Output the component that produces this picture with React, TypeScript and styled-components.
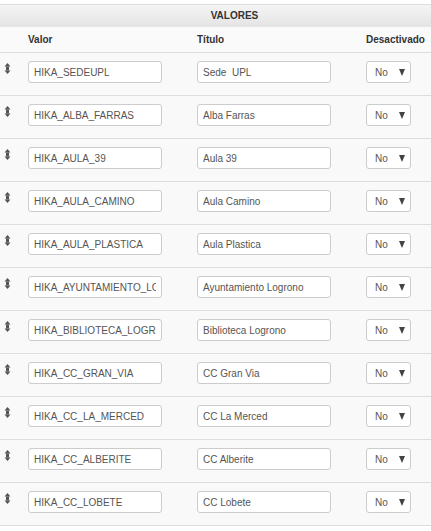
import { createGlobalStyle, styled } from 'styled-components';

const GlobalStyle = createGlobalStyle`
    html, body {
        margin: 0;
        padding: 0;
        background: #ffffff;
        overflow: hidden;
    }
    body {
        font-family: 'Liberation Sans', Arial, sans-serif;
    }
`;

const Page = styled.div`
    padding-top: 4px;
`;

const Table = styled.div`
    width: 431px;
    border-top: 1px solid #dddddd;
    background: #f9f9f9;
`;

// the real table is wider than the window, so the caption sits right of centre
const Caption = styled.div`
    height: 22px;
    line-height: 22px;
    padding-left: 38px;
    text-align: center;
    font-size: 10px;
    font-weight: bold;
    color: #333333;
    background: linear-gradient(to bottom, #f4f4f4, #e4e4e4);
`;

const HeadRow = styled.div`
    display: grid;
    grid-template-columns: 20px 169px 169px 1fr;
    height: 25px;
    align-items: center;
    background: #fafafa;
    border-bottom: 1px solid #dddddd;
`;

const HeadCell = styled.div`
    padding-left: 8px;
    font-size: 10px;
    font-weight: bold;
    color: #333333;
    white-space: nowrap;
`;

const Row = styled.div`
    display: grid;
    grid-template-columns: 20px 169px 169px 1fr;
    align-items: start;
    height: 34px;
    padding-top: 8px;
    border-bottom: 1px solid #dddddd;

    &:first-of-type {
        padding-top: 6px;
    }
`;

const Handle = styled.div`
    display: flex;
    justify-content: center;
    padding-top: 2px;
    padding-right: 6px;
`;

const Cell = styled.div`
    padding-left: 8px;
`;

const TextBox = styled.input`
    display: block;
    box-sizing: border-box;
    width: 134px;
    height: 22px;
    margin: 0;
    padding: 0 5px;
    border: 1px solid #cccccc;
    border-radius: 3px;
    background: #ffffff;
    font-family: 'Liberation Sans', Arial, sans-serif;
    font-size: 10px;
    color: #555555;
    outline: none;
`;

const SelectBox = styled.div`
    box-sizing: border-box;
    width: 45px;
    height: 22px;
    padding: 0 5px 0 8px;
    display: flex;
    align-items: center;
    justify-content: space-between;
    border: 1px solid #cccccc;
    border-radius: 3px;
    background: #ffffff;
    font-size: 10px;
    color: #555555;
`;

const Arrow = styled.span`
    width: 0;
    height: 0;
    border-left: 3.5px solid transparent;
    border-right: 3.5px solid transparent;
    border-top: 7px solid #444444;
`;

const rows: [string, string][] = [
    ['HIKA_SEDEUPL', 'Sede  UPL'],
    ['HIKA_ALBA_FARRAS', 'Alba Farras'],
    ['HIKA_AULA_39', 'Aula 39'],
    ['HIKA_AULA_CAMINO', 'Aula Camino'],
    ['HIKA_AULA_PLASTICA', 'Aula Plastica'],
    ['HIKA_AYUNTAMIENTO_LOGRONO', 'Ayuntamiento Logrono'],
    ['HIKA_BIBLIOTECA_LOGRONO', 'Biblioteca Logrono'],
    ['HIKA_CC_GRAN_VIA', 'CC Gran Via'],
    ['HIKA_CC_LA_MERCED', 'CC La Merced'],
    ['HIKA_CC_ALBERITE', 'CC Alberite'],
    ['HIKA_CC_LOBETE', 'CC Lobete'],
];

function DragIcon() {
    return (
        <svg width="7" height="11" viewBox="0 0 7 11">
            <polygon points="0.5,3.5 3.5,0 6.5,3.5" fill="#555" />
            <rect x="2" y="3.5" width="3" height="4" fill="#555" />
            <polygon points="0.5,7.5 3.5,11 6.5,7.5" fill="#555" />
        </svg>
    );
}

export default function App() {
    return (
        <Page>
            <GlobalStyle />
            <Table>
                <Caption>VALORES</Caption>
                <HeadRow>
                    <div />
                    <HeadCell>Valor</HeadCell>
                    <HeadCell>Título</HeadCell>
                    <HeadCell>Desactivado</HeadCell>
                </HeadRow>
                {rows.map(([value, title]) => (
                    <Row key={value}>
                        <Handle>
                            <DragIcon />
                        </Handle>
                        <Cell>
                            <TextBox type="text" defaultValue={value} />
                        </Cell>
                        <Cell>
                            <TextBox type="text" defaultValue={title} />
                        </Cell>
                        <Cell>
                            <SelectBox>
                                No
                                <Arrow />
                            </SelectBox>
                        </Cell>
                    </Row>
                ))}
            </Table>
        </Page>
    );
}
